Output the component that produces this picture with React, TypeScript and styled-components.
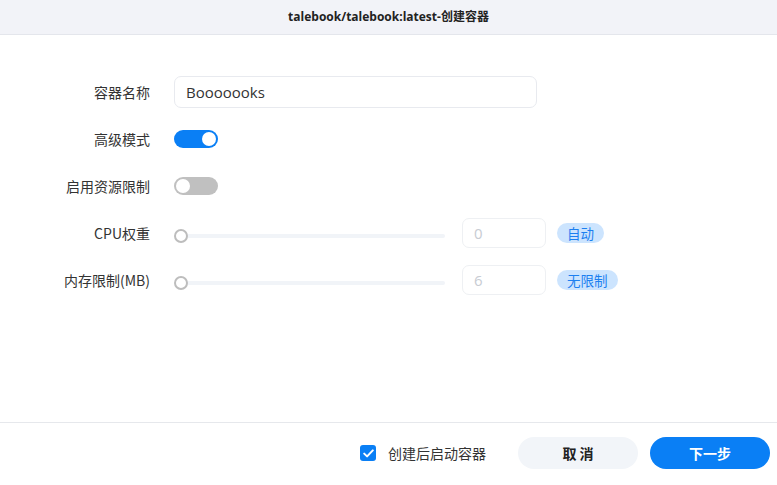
import styled, { createGlobalStyle } from "styled-components";

const GlobalStyle = createGlobalStyle`
  html, body {
    margin: 0;
    padding: 0;
    background: #ffffff;
  }
  body {
    font-family: "Open Sans", "Noto Sans CJK SC", sans-serif;
    color: #333333;
  }
  * {
    box-sizing: border-box;
  }
`;

const Dialog = styled.div`
  width: 777px;
  height: 485px;
  display: flex;
  flex-direction: column;
  background: #fff;
  overflow: hidden;
`;

const Header = styled.div`
  height: 35px;
  flex: none;
  display: flex;
  align-items: center;
  justify-content: center;
  background: #f2f3f8;
  border-bottom: 1px solid #e4e6ec;
  font-size: 12px;
  font-weight: 700;
  color: #222;
  padding-bottom: 2px;
`;

const Body = styled.div`
  flex: 1;
  padding: 41px 0 0 0;
  display: flex;
  flex-direction: column;
  gap: 15px;
`;

const Row = styled.div`
  height: 32px;
  display: flex;
  align-items: center;
`;

const Label = styled.div`
  width: 150px;
  padding-right: 0;
  text-align: right;
  font-size: 14px;
  color: #333;
  flex: none;
  margin-right: 24px;
  font-family: "Noto Sans CJK SC", "Open Sans", sans-serif;
`;

const TextField = styled.div`
  width: 363px;
  height: 32px;
  border: 1px solid #e8eaef;
  border-radius: 7px;
  display: flex;
  align-items: center;
  padding-left: 11px;
  font-size: 15px;
  color: #333;
`;

const Switch = styled.div<{ $on?: boolean }>`
  width: 44px;
  height: 18px;
  border-radius: 9px;
  background: ${(p) => (p.$on ? "#0a7ff5" : "#c0c0c0")};
  display: flex;
  align-items: center;
  justify-content: ${(p) => (p.$on ? "flex-end" : "flex-start")};
  padding: 0 2px;
`;

const Knob = styled.div`
  width: 14px;
  height: 14px;
  border-radius: 50%;
  background: #fff;
`;

const Slider = styled.div`
  width: 271px;
  height: 14px;
  position: relative;
  display: flex;
  align-items: center;
  margin-right: 17px;
  margin-top: 6px;
`;

const Track = styled.div`
  flex: 1;
  height: 4px;
  margin-left: 7px;
  border-radius: 2px;
  background: #f1f4f8;
`;

const Thumb = styled.div`
  position: absolute;
  left: 0;
  top: 0;
  width: 14px;
  height: 14px;
  border-radius: 50%;
  border: 2px solid #bdbdbd;
  background: #fff;
`;

const NumberBox = styled.div`
  width: 84px;
  height: 30px;
  border: 1px solid #eef0f3;
  border-radius: 7px;
  display: flex;
  align-items: center;
  padding-left: 11px;
  font-size: 15px;
  color: #c8ccd3;
  margin-right: 11px;
`;

const Badge = styled.div`
  height: 20px;
  padding: 0 10px;
  border-radius: 10px;
  background: #cce4fe;
  color: #1c7ff0;
  font-size: 13.5px;
  display: flex;
  align-items: center;
  font-family: "Noto Sans CJK SC", sans-serif;
`;

const Footer = styled.div`
  height: 63px;
  flex: none;
  border-top: 1px solid #e6e8ec;
  display: flex;
  align-items: center;
  justify-content: flex-end;
  padding-right: 7px;
  padding-bottom: 2px;
`;

const CheckWrap = styled.div`
  display: flex;
  align-items: center;
  gap: 12px;
  margin-right: 32px;
  font-size: 14px;
  color: #333;
  font-family: "Noto Sans CJK SC", sans-serif;
`;

const CheckBox = styled.div`
  width: 16px;
  height: 16px;
  border-radius: 3px;
  background: #0a7ff5;
  display: flex;
  align-items: center;
  justify-content: center;
`;

const Button = styled.div<{ $primary?: boolean }>`
  width: 120px;
  height: 32px;
  border-radius: 16px;
  display: flex;
  align-items: center;
  justify-content: center;
  font-size: 14px;
  font-weight: 700;
  font-family: "Noto Sans CJK SC", sans-serif;
  background: ${(p) => (p.$primary ? "#0a7ff5" : "#f2f5f9")};
  color: ${(p) => (p.$primary ? "#ffffff" : "#222222")};
  margin-left: ${(p) => (p.$primary ? "12px" : "0")};
`;

export default function App() {
  return (
    <>
      <GlobalStyle />
      <Dialog>
        <Header>talebook/talebook:latest-创建容器</Header>
        <Body>
          <Row>
            <Label>容器名称</Label>
            <TextField>Booooooks</TextField>
          </Row>
          <Row>
            <Label>高级模式</Label>
            <Switch $on>
              <Knob />
            </Switch>
          </Row>
          <Row>
            <Label>启用资源限制</Label>
            <Switch>
              <Knob />
            </Switch>
          </Row>
          <Row>
            <Label>CPU权重</Label>
            <Slider>
              <Thumb />
              <Track />
            </Slider>
            <NumberBox>0</NumberBox>
            <Badge>自动</Badge>
          </Row>
          <Row>
            <Label>内存限制(MB)</Label>
            <Slider>
              <Thumb />
              <Track />
            </Slider>
            <NumberBox>6</NumberBox>
            <Badge>无限制</Badge>
          </Row>
        </Body>
        <Footer>
          <CheckWrap>
            <CheckBox>
              <svg width="11" height="9" viewBox="0 0 11 9">
                <path
                  d="M1.2 4.6 L4.1 7.4 L9.8 1.4"
                  fill="none"
                  stroke="#fff"
                  strokeWidth="2"
                  strokeLinecap="round"
                  strokeLinejoin="round"
                />
              </svg>
            </CheckBox>
            创建后启动容器
          </CheckWrap>
          <Button>取 消</Button>
          <Button $primary>下一步</Button>
        </Footer>
      </Dialog>
    </>
  );
}
